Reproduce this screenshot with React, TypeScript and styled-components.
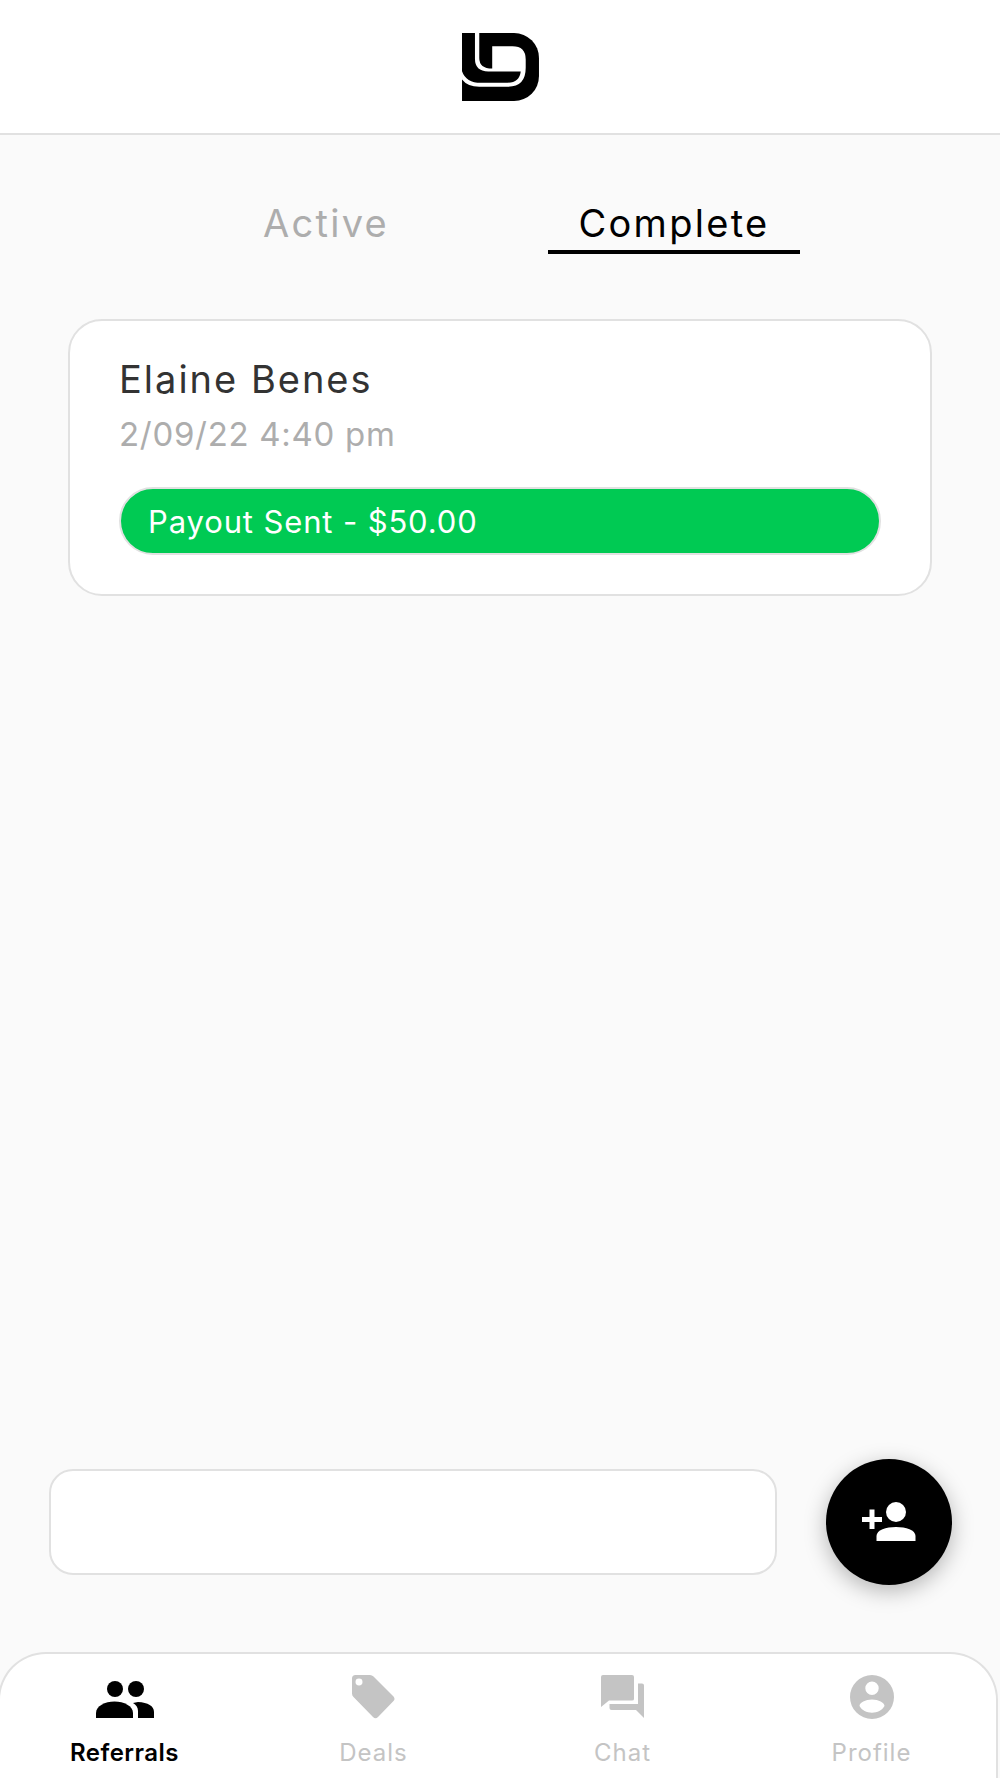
import React from "react";
import styled, { createGlobalStyle } from "styled-components";

const Global = createGlobalStyle`
  html, body { margin: 0; padding: 0; background: #fafafa; }
  * { box-sizing: border-box; }
`;

const Page = styled.div`
  width: 1000px;
  height: 1778px;
  display: flex;
  flex-direction: column;
  background: #fafafa;
  font-family: Inter, "Noto Sans", sans-serif;
  overflow: hidden;
`;

const Header = styled.header`
  height: 135px;
  flex: none;
  background: #fff;
  border-bottom: 2px solid #e1e1e1;
  display: flex;
  align-items: flex-start;
  justify-content: center;
  padding-top: 33px;
`;

const Tabs = styled.nav`
  display: flex;
  justify-content: center;
  gap: 96px;
  padding-top: 64px;
  flex: none;
`;

const Tab = styled.div<{ $active?: boolean }>`
  width: 252px;
  height: 55px;
  text-align: center;
  font-size: 38px;
  line-height: 49px;
  letter-spacing: 2.3px;
  color: ${(p) => (p.$active ? "#000" : "#adadad")};
  border-bottom: 4px solid ${(p) => (p.$active ? "#000" : "transparent")};
`;

const Card = styled.section`
  flex: none;
  margin: 65px 68px 0;
  height: 277px;
  padding: 36px 49px 0;
  background: #fff;
  border: 2px solid #e1e1e1;
  border-radius: 34px;
`;

const Name = styled.div`
  font-size: 38px;
  line-height: 44px;
  letter-spacing: 2px;
  color: #333;
`;

const DateText = styled.div`
  margin-top: 12px;
  font-size: 33px;
  line-height: 42px;
  letter-spacing: 0.7px;
  color: #adadad;
`;

const Pill = styled.div`
  margin-top: 32px;
  height: 68px;
  padding-left: 27px;
  display: flex;
  align-items: center;
  background: #00ca53;
  border: 2px solid #e1e1e1;
  border-radius: 34px;
  color: #fff;
  font-size: 31px;
  letter-spacing: 0.87px;
`;

const Spacer = styled.div`
  flex: 1;
`;

const ActionRow = styled.div`
  flex: none;
  display: flex;
  align-items: center;
  justify-content: space-between;
  padding: 0 48px 0 49px;
  margin-bottom: 67px;
`;

const InputBox = styled.div`
  width: 728px;
  height: 106px;
  background: #fff;
  border: 2px solid #e1e1e1;
  border-radius: 24px;
`;

const Fab = styled.button`
  width: 126px;
  height: 126px;
  padding: 0;
  border: none;
  border-radius: 50%;
  background: #000;
  box-shadow: 0 6px 22px rgba(0, 0, 0, 0.28);
  display: flex;
  align-items: center;
  justify-content: center;
`;

const BottomNav = styled.nav`
  flex: none;
  width: 1000px;
  margin-left: -2px;
  height: 126px;
  display: grid;
  grid-template-columns: repeat(4, 1fr);
  background: #fff;
  border: 2px solid #e1e1e1;
  border-bottom: none;
  border-radius: 48px 48px 0 0;
`;

const NavItem = styled.div<{ $active?: boolean }>`
  display: flex;
  flex-direction: column;
  align-items: center;
  color: ${(p) => (p.$active ? "#000" : "#c4c4c4")};
`;

const IconSlot = styled.div`
  height: 66px;
  padding-top: 19px;
  display: flex;
  align-items: center;
  justify-content: center;
`;

const NavLabel = styled.span<{ $active?: boolean }>`
  font-size: 24px;
  line-height: 30px;
  margin-top: 18px;
  font-weight: ${(p) => (p.$active ? 600 : 400)};
  letter-spacing: ${(p) => (p.$active ? "0.45px" : "1px")};
`;

const Logo = () => (
  <svg width="77" height="68" viewBox="183 100 232 205" aria-label="logo">
    <path
      fill="#000"
      d="M183 100H340A75 75 0 0 1 415 175V230A75 75 0 0 1 340 305H183Z"
    />
    <path
      fill="#fff"
      d="M215 100H235V175Q235 207 274 207V140H335Q375 140 375 180V205Q375 262 322 262H235Q200 262 183 240V150Z"
    />
    <path
      fill="#000"
      d="M183 100H222V178Q222 216 262 216H360Q356 250 320 250H240Q195 250 183 215Z"
    />
  </svg>
);

const PeopleIcon = () => (
  <svg width="58" height="46" viewBox="0 -7 58 46" fill="currentColor">
    <circle cx="19" cy="8" r="8" />
    <circle cx="40" cy="8" r="8" />
    <path d="M0 37V32C0 25 9 20.500 18.500 20.500S37 25 37 32V37Z" />
    <path d="M42 21C52 21.500 58 25 58 31V37H42V30C42 26.500 40 23.500 37 22Z" />
  </svg>
);

const TagIcon = () => (
  <svg width="43" height="44" viewBox="0 0 43 44" fill="currentColor">
    <path
      fillRule="evenodd"
      d="M3.500 0H18Q20 0 21.500 1.500L41.500 21.500Q43.500 24 41.500 26L26 42Q23.500 44.500 21 42L1.500 22Q0 20.500 0 18.500V3.500Q0 0 3.500 0ZM7 3.500A3.500 3.500 0 1 0 7.010 10.500A3.500 3.500 0 1 0 7 3.500Z"
    />
  </svg>
);

const ChatIcon = () => (
  <svg width="43" height="43" viewBox="0 0 43 43" fill="currentColor">
    <path d="M2 0H31Q33 0 33 2V24Q33 25.500 31 25.500H8L0 32V2Q0 0 2 0Z" />
    <path d="M37 8.500H41Q43 8.500 43 10.500V43L35 35H10.500Q8.500 35 8.500 33V29H37Z" />
  </svg>
);

const ProfileIcon = () => (
  <svg width="44" height="44" viewBox="0 0 44 44" fill="currentColor">
    <path
      fillRule="evenodd"
      d="M22 0A22 22 0 1 1 22 44A22 22 0 1 1 22 0ZM22 6.500A6.700 6.700 0 1 0 22.010 19.900A6.700 6.700 0 1 0 22 6.500ZM22 24.500C15.500 24.500 9.500 27.500 9.500 31C12 35.500 16.500 37.700 22 37.700S32 35.500 34.500 31C34.500 27.500 28.500 24.500 22 24.500Z"
    />
  </svg>
);

const AddPersonIcon = () => (
  <svg width="54" height="40" viewBox="0 0 54 40" fill="#fff">
    <circle cx="34" cy="10" r="10" />
    <path d="M14.500 39V34C14.500 28 24 25 34 25S53.500 28 53.500 34V39Z" />
    <path d="M7.500 7.500H12.500V15H20V20H12.500V27H7.500V20H0V15H7.500Z" />
  </svg>
);

const navItems = [
  { label: "Referrals", icon: <PeopleIcon />, active: true },
  { label: "Deals", icon: <TagIcon /> },
  { label: "Chat", icon: <ChatIcon /> },
  { label: "Profile", icon: <ProfileIcon /> },
];

export default function App() {
  return (
    <Page>
      <Global />
      <Header>
        <Logo />
      </Header>
      <Tabs>
        <Tab>Active</Tab>
        <Tab $active>Complete</Tab>
      </Tabs>
      <Card>
        <Name>Elaine Benes</Name>
        <DateText>2/09/22 4:40 pm</DateText>
        <Pill>Payout Sent - $50.00</Pill>
      </Card>
      <Spacer />
      <ActionRow>
        <InputBox />
        <Fab aria-label="Add referral">
          <AddPersonIcon />
        </Fab>
      </ActionRow>
      <BottomNav>
        {navItems.map((item) => (
          <NavItem key={item.label} $active={item.active}>
            <IconSlot>{item.icon}</IconSlot>
            <NavLabel $active={item.active}>{item.label}</NavLabel>
          </NavItem>
        ))}
      </BottomNav>
    </Page>
  );
}
